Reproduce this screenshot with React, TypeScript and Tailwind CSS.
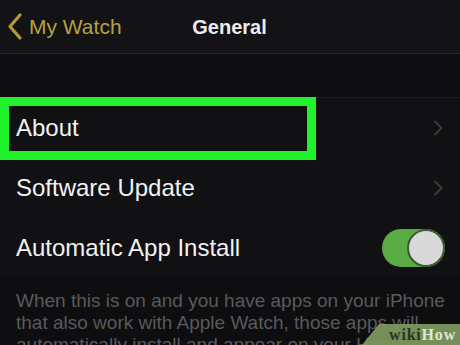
import React from "react";

const Chevron = () => (
  <svg width="10" height="16" viewBox="0 0 10 16" className="shrink-0">
    <polyline points="2,1.5 8.5,8 2,14.5" fill="none" stroke="#3a3a3c" strokeWidth="2" strokeLinecap="round" strokeLinejoin="round" />
  </svg>
);

export default function App() {
  const font = { fontFamily: '"Liberation Sans", Arial, sans-serif' };
  return (
    <div className="relative w-[460px] h-[345px] overflow-hidden bg-[#0e0e10]" style={font}>
      {/* Header */}
      <div className="relative flex items-center h-[54px] bg-[#131315] border-b border-[#27272a]">
        <div className="flex items-center pl-[7px] gap-[7px]">
          <svg width="15" height="27" viewBox="0 0 15 27">
            <polyline points="13,2 3,13.5 13,25" fill="none" stroke="#b49a33" strokeWidth="3.2" strokeLinecap="round" strokeLinejoin="round" />
          </svg>
          <span className="text-[21px] text-[#b6a046] leading-none">My Watch</span>
        </div>
        <div className="absolute left-0 right-0 top-0 bottom-0 flex items-center justify-center pointer-events-none">
          <span className="text-[20px] font-bold text-[#ececec] leading-none ml-[-1px]">General</span>
        </div>
      </div>

      <div className="h-[43px]" />

      {/* Rows */}
      <div className="bg-[#111113] border-t border-[#1a1a1c]">
        <div className="relative flex items-center justify-between h-[60px] pl-[16px] pr-[17px]">
          <span className="text-[24px] text-[#f2f2f2]">About</span>
          <Chevron />
          <div className="absolute left-0 top-[-1px] w-[316px] h-[63px] border-[9px] border-[#22f22e]" />
        </div>
        <div className="flex items-center justify-between h-[60px] pl-[16px] pr-[17px]">
          <span className="text-[24px] text-[#f2f2f2]">Software Update</span>
          <Chevron />
        </div>
        <div className="flex items-center justify-between h-[60px] pl-[16px] pr-[15px]">
          <span className="text-[24px] text-[#f2f2f2]">Automatic App Install</span>
          <div className="relative w-[63px] h-[38px] rounded-full bg-[#5aab45]">
            <div className="absolute right-[0px] top-[0px] w-[38px] h-[38px] rounded-full bg-[#d9d9d9] border-2 border-[#3c5a33]" />
          </div>
        </div>
      </div>

      {/* Footer text */}
      <div className="pl-[16px] pr-[10px] pt-[12px] text-[19px] leading-[22px] text-[#59595c]">
        When this is on and you have apps on your iPhone that also work with Apple Watch, those apps will automatically install and appear on your Home screen.
      </div>

      {/* wikiHow watermark */}
      <div className="absolute right-0 bottom-0 w-[98px] h-[21px]">
        <svg className="absolute inset-0" width="98" height="21" viewBox="0 0 98 21">
          <polygon points="17,0 98,0 98,21 0,21" fill="#7d9a5d" fillOpacity="0.92" />
        </svg>
        <div className="absolute inset-0 flex items-center justify-end pr-[4px] pt-[1px] text-[16px] font-bold leading-none tracking-[0.8px]" style={{ fontFamily: '"Liberation Serif", "Times New Roman", serif' }}>
          <span className="text-[#2a3520]">wiki</span>
          <span className="text-[#dfe6d5]">How</span>
        </div>
      </div>
    </div>
  );
}
